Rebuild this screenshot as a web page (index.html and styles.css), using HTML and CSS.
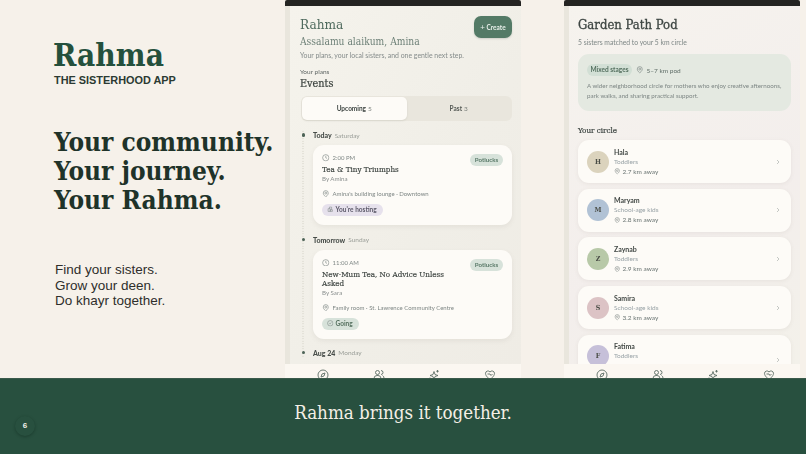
FILE: index.html
```html
<!DOCTYPE html>
<html lang="en">
<head>
<meta charset="utf-8">
<title>Rahma</title>
<link rel="stylesheet" href="styles.css">
</head>
<body>
<svg class="sprite" xmlns="http://www.w3.org/2000/svg">
  <symbol id="clock" viewBox="0 0 24 24"><circle cx="12" cy="12" r="10"/><path d="M12 6v6l4 2"/></symbol>
  <symbol id="pin" viewBox="0 0 24 24"><path d="M20 10c0 6-8 12-8 12s-8-6-8-12a8 8 0 0 1 16 0z"/><circle cx="12" cy="10" r="3"/></symbol>
  <symbol id="check" viewBox="0 0 24 24"><circle cx="12" cy="12" r="10"/><path d="M8 12l3 3 5-6"/></symbol>
  <symbol id="chev" viewBox="0 0 24 24"><path d="M8 4l8 8-8 8"/></symbol>
  <symbol id="host" viewBox="0 0 24 24"><path d="M4 20V10h8v10zM12 20v-6h8v6zM9 10V4h8v10"/></symbol>
  <symbol id="compass" viewBox="0 0 24 24"><circle cx="12" cy="12" r="10"/><path d="M16 8l-2 6-6 2 2-6z"/></symbol>
  <symbol id="people" viewBox="0 0 24 24"><circle cx="9" cy="7" r="4"/><path d="M2 21v-2a6 6 0 0 1 6-6h2a6 6 0 0 1 6 6v2"/><path d="M16 3a4 4 0 0 1 0 8M19 13a6 6 0 0 1 3 6v2"/></symbol>
  <symbol id="spark" viewBox="0 0 24 24"><path d="M12 5l2 6 6 2-6 2-2 6-2-6-6-2 6-2z"/><path d="M19 2v5M16.500 4.500h5M4 17v4M2 19h4"/></symbol>
  <symbol id="heart" viewBox="0 0 24 24"><path d="M12 21S3 15 3 8.500A5 5 0 0 1 12 6a5 5 0 0 1 9 2.500C21 15 12 21 12 21z"/><path d="M7 10h5l2 3 3-3"/></symbol>
</svg>
<main class="slide">
  <section class="stage">
    <div class="intro">
      <h1 class="brand">Rahma</h1>
      <p class="tagline">THE SISTERHOOD APP</p>
      <h2 class="headline">Your community.<br>Your journey.<br>Your Rahma.</h2>
      <p class="lede">Find your sisters.<br>Grow your deen.<br>Do khayr together.</p>
    </div>

    <div class="phone phone-events">
      <div class="status"></div>
      <div class="screen">
        <div class="scroll scroll-events">
          <header class="app-head">
            <div>
              <div class="app-name">Rahma</div>
              <div class="greet">Assalamu alaikum, Amina</div>
            </div>
            <div class="create"><span class="plus">+</span> Create</div>
          </header>
          <p class="app-sub">Your plans, your local sisters, and one gentle next step.</p>
          <p class="eyebrow">Your plans</p>
          <h3 class="events-title">Events</h3>
          <div class="segment">
            <div class="seg seg-on"><b>Upcoming</b> <span>5</span></div>
            <div class="seg"><b>Past</b> <span>3</span></div>
          </div>
          <div class="timeline">
            <div class="day"><i class="dot"></i><b>Today</b> <span>Saturday</span></div>
            <article class="event">
              <span class="tag">Potlucks</span>
              <div class="time"><svg class="ic ic-clock"><use href="#clock"/></svg>2:00 PM</div>
              <h4 class="event-title">Tea &amp; Tiny Triumphs</h4>
              <div class="by">By Amina</div>
              <div class="place"><svg class="ic ic-clock"><use href="#pin"/></svg>Amina's building lounge · Downtown</div>
              <span class="state state-host"><svg class="ic ic-small"><use href="#host"/></svg>You're hosting</span>
            </article>
            <div class="day day-next"><i class="dot"></i><b>Tomorrow</b> <span>Sunday</span></div>
            <article class="event">
              <span class="tag">Potlucks</span>
              <div class="time"><svg class="ic ic-clock"><use href="#clock"/></svg>11:00 AM</div>
              <h4 class="event-title">New-Mum Tea, No Advice Unless Asked</h4>
              <div class="by">By Sara</div>
              <div class="place"><svg class="ic ic-clock"><use href="#pin"/></svg>Family room · St. Lawrence Community Centre</div>
              <span class="state state-going"><svg class="ic ic-small"><use href="#check"/></svg>Going</span>
            </article>
            <div class="day day-last"><i class="dot"></i><b>Aug 24</b> <span>Monday</span></div>
          </div>
        </div>
        <nav class="tabs">
          <svg class="tab"><use href="#compass"/></svg>
          <svg class="tab"><use href="#people"/></svg>
          <svg class="tab"><use href="#spark"/></svg>
          <svg class="tab"><use href="#heart"/></svg>
        </nav>
      </div>
    </div>

    <div class="phone phone-pod">
      <div class="status"></div>
      <div class="screen">
        <div class="scroll scroll-pod">
          <h3 class="pod-title">Garden Path Pod</h3>
          <p class="pod-sub">5 sisters matched to your 5 km circle</p>
          <div class="pod-card">
            <div class="pod-meta"><span class="stage-pill">Mixed stages</span><svg class="ic ic-clock"><use href="#pin"/></svg><span>5–7 km pod</span></div>
            <p class="pod-desc">A wider neighborhood circle for mothers who enjoy creative afternoons, park walks, and sharing practical support.</p>
          </div>
          <h4 class="circle-title">Your circle</h4>
          <div class="members">
            <div class="member"><div class="avatar av-h">H</div><div class="who"><b>Hala</b><span>Toddlers</span><em><svg class="ic ic-small"><use href="#pin"/></svg>2.7 km away</em></div><svg class="chev"><use href="#chev"/></svg></div>
            <div class="member"><div class="avatar av-m">M</div><div class="who"><b>Maryam</b><span>School-age kids</span><em><svg class="ic ic-small"><use href="#pin"/></svg>2.8 km away</em></div><svg class="chev"><use href="#chev"/></svg></div>
            <div class="member"><div class="avatar av-z">Z</div><div class="who"><b>Zaynab</b><span>Toddlers</span><em><svg class="ic ic-small"><use href="#pin"/></svg>2.9 km away</em></div><svg class="chev"><use href="#chev"/></svg></div>
            <div class="member"><div class="avatar av-s">S</div><div class="who"><b>Samira</b><span>School-age kids</span><em><svg class="ic ic-small"><use href="#pin"/></svg>3.2 km away</em></div><svg class="chev"><use href="#chev"/></svg></div>
            <div class="member member-last"><div class="avatar av-f">F</div><div class="who"><b>Fatima</b><span>Toddlers</span></div><svg class="chev"><use href="#chev"/></svg></div>
          </div>
        </div>
        <nav class="tabs">
          <svg class="tab"><use href="#compass"/></svg>
          <svg class="tab"><use href="#people"/></svg>
          <svg class="tab"><use href="#spark"/></svg>
          <svg class="tab"><use href="#heart"/></svg>
        </nav>
      </div>
    </div>
  </section>

  <footer class="banner">
    <p class="banner-text">Rahma brings it together.</p>
    <div class="page-no">6</div>
  </footer>
</main>
</body>
</html>
```
FILE: styles.css
```css
* { box-sizing: border-box; margin: 0; padding: 0; }
html, body { width: 806px; height: 454px; overflow: hidden; }
body { background: #f6f1ea; font-family: Lato, sans-serif; }
.sprite { display: none; }

.slide { position: relative; width: 806px; height: 454px; display: flex; flex-direction: column; }
.stage { height: 378px; display: flex; overflow: hidden; }

/* Left intro */
.intro { width: 285px; flex: none; padding: 39px 0 0 53px; color: #1f3a2d; }
.brand { font: 700 31.300px/32px "DejaVu Serif Condensed", "DejaVu Serif", serif; color: #24503c; }
.tagline { font: 700 10.900px/14px "Liberation Sans", sans-serif; color: #2b3a32; margin: 2px 0 0 1px; }
.headline { font: 700 26px/29px "DejaVu Serif Condensed", "DejaVu Serif", serif; color: #1f3329; margin: 41px 0 0 1px; white-space: nowrap; }
.lede { font: 400 13.500px/15.500px "Liberation Sans", sans-serif; color: #2e2e2c; margin: 47px 0 0 2px; }

/* Phones */
.phone { flex: none; width: 236px; display: flex; flex-direction: column; height: 378px; filter: blur(.35px); }
.phone-pod { margin-left: 43px; }
.status { height: 6px; flex: none; background: #242422; border-radius: 2px 2px 0 0; }
.screen { flex: 1; min-height: 0; display: flex; flex-direction: column; }
.scroll { flex: 1; min-height: 0; overflow: hidden; border-left: 5px solid #e9e6dd; }
.scroll-events { background: linear-gradient(120deg, #f5f3ec 0%, #f0eee7 60%, #efece5 100%); padding: 11px 9px 0 10px; }
.scroll-pod { background: linear-gradient(150deg, #f6f3ee 0%, #f3eeec 60%, #f3f1ea 100%); padding: 11px 9px 0 9px; }
.tabs { height: 14px; flex: none; overflow: hidden; background: #fbf7f1; display: flex; justify-content: space-between; padding: 5px 25px 0 32px; }
.tab { width: 12px; height: 12px; flex: none; fill: none; stroke: #5c6e65; stroke-width: 1.800; }

.ic { fill: none; stroke: #6f7a78; stroke-width: 1.800; flex: none; }
.ic-clock { width: 7.500px; height: 7.500px; margin-right: 3px; }
.ic-small { width: 6.500px; height: 6.500px; margin-right: 2px; }

/* Events */
.app-head { display: flex; justify-content: space-between; align-items: flex-start; }
.app-name { font: 400 13.500px/17px "DejaVu Serif Condensed", "DejaVu Serif", serif; color: #4e6a5d; margin-top: -1px; }
.greet { font: 400 10.200px/13px "DejaVu Serif Condensed", "DejaVu Serif", serif; color: #6e8178; margin-top: 2px; }
.create { width: 38px; height: 22px; margin-top: -1px; background: #537a66; border-radius: 7px; color: #e8efe9; font: 700 6.500px/22px Lato, sans-serif; text-align: center; box-shadow: 0 1px 2px rgba(60,80,70,.2); }
.plus { font-size: 8px; font-weight: 400; }
.app-sub { font-size: 6.900px; line-height: 10px; color: #858c8b; margin-top: 2px; }
.eyebrow { font-size: 6.500px; line-height: 8px; color: #5f6664; margin-top: 8px; }
.events-title { font: 400 10.800px/13px "DejaVu Serif Condensed", "DejaVu Serif", serif; -webkit-text-stroke: .2px #39403c; color: #39403c; margin-top: 1px; }
.segment { display: flex; height: 25px; margin: 6px 0 0 1px; background: #e9e6dd; border-radius: 6px; padding: 1px; width: 211px; }
.seg { flex: 1; display: flex; align-items: center; justify-content: center; gap: 2px; font-size: 6.500px; color: #7b807c; }
.seg b { font-weight: 700; color: #555a56; }
.seg-on { background: #fdfbf7; border-radius: 5px; box-shadow: 0 1px 2px rgba(90,90,70,.12); }
.seg-on b { color: #3f4643; }

.timeline { margin-top: 9px; background: radial-gradient(circle, #dedcd2 .5px, transparent .7px) 2px 0 / 2px 2.500px repeat-y; }
.day { display: flex; align-items: center; height: 10px; font-size: 6.500px; color: #9a9e98; padding-left: 18px; gap: 3px; position: relative; margin-left: -5px; }
.day b { font-weight: 900; font-size: 7px; color: #474d49; }
.dot { position: absolute; left: 6.500px; top: 3px; width: 3.500px; height: 3.500px; border-radius: 50%; background: #4d6357; }
.day-next { margin-top: 10px; }
.day-last { margin-top: 9px; }
.event { position: relative; width: 199px; margin: 5px 0 0 13px; background: #fdfbf7; border-radius: 11px; padding: 9px; box-shadow: 0 2px 5px rgba(110,105,85,.09); }
.tag { position: absolute; top: 9px; right: 9px; width: 33px; height: 12px; border-radius: 6px; background: #d7e2da; color: #5a7a69; font-size: 6.200px; font-weight: 700; line-height: 12px; text-align: center; }
.time { display: flex; align-items: center; font-size: 6px; line-height: 8px; color: #7f8785; }
.event-title { font: 400 8px/9.500px "DejaVu Serif Condensed", "DejaVu Serif", serif; -webkit-text-stroke: .15px #3d4440; color: #3d4440; margin-top: 3px; width: 130px; }
.by { font-size: 6.200px; line-height: 8px; color: #8a8f8e; margin-top: 0; }
.place { display: flex; align-items: center; font-size: 6px; line-height: 8px; color: #7f8785; margin-top: 7px; }
.state { display: flex; width: fit-content; align-items: center; height: 12px; padding: 0 6px 0 5px; border-radius: 6px; font-size: 6.500px; font-weight: 700; margin-top: 6px; }
.state-host { background: #e6e1ec; color: #5d5a6a; }
.state-going { background: #d7e2da; color: #55705f; }

/* Pod */
.pod-title { font: 400 13px/17px "DejaVu Serif Condensed", "DejaVu Serif", serif; -webkit-text-stroke: .3px #3e4643; color: #3e4643; margin-top: -1px; }
.pod-sub { font-size: 6.800px; line-height: 10px; color: #7e8786; margin-top: 4px; }
.pod-card { background: #e4e9e1; border-radius: 11px; padding: 10px 9px 0; height: 57px; margin-top: 7px; width: 213px; }
.pod-meta { display: flex; align-items: center; font-size: 6.500px; color: #5f6d67; }
.stage-pill { width: 45px; height: 12px; border-radius: 6px; background: #d2dfd5; color: #557060; font-weight: 700; line-height: 12px; text-align: center; margin-right: 4px; }
.pod-desc { font-size: 6.200px; line-height: 10px; color: #7d8684; margin-top: 5px; }
.circle-title { font: 400 8px/11px "DejaVu Serif Condensed", "DejaVu Serif", serif; -webkit-text-stroke: .2px #3e4643; color: #3e4643; margin-top: 14px; }
.members { display: flex; flex-direction: column; gap: 5.700px; margin-top: 4px; }
.member { display: flex; align-items: center; height: 43px; flex: none; width: 213px; background: #fdfbf7; border-radius: 11px; padding: 0 10px 0 9px; box-shadow: 0 1px 4px rgba(110,105,85,.09); }
.member-last { align-items: flex-start; padding-top: 7px; }
.member-last .chev { margin-top: 15px; }
.avatar { width: 22px; height: 22px; flex: none; border-radius: 50%; font: 700 7px/22px "DejaVu Serif Condensed", "DejaVu Serif", serif; color: #4a4d46; text-align: center; margin-right: 5px; }
.member-last .avatar { margin-top: 3px; }
.av-h { background: #dbd3bd; }
.av-m { background: #b1c2d5; }
.av-z { background: #b8c9a8; }
.av-s { background: #dcc3c5; }
.av-f { background: #c6c0d9; }
.who { flex: 1; display: flex; flex-direction: column; gap: 2px; }
.who b { font-size: 7px; font-weight: 700; line-height: 8px; color: #444a47; }
.who span { font-size: 6.500px; line-height: 8px; color: #98a2a6; }
.who em { display: flex; align-items: center; font-style: normal; font-size: 6.500px; line-height: 8px; color: #6a7472; }
.chev { width: 6px; height: 6px; flex: none; fill: none; stroke: #a3a8a5; stroke-width: 2.500; }

/* Banner */
.banner { flex: 1; background: #28503f; display: flex; align-items: center; justify-content: center; border-top: 1px solid #3b5a4b; }
.banner-text { font: 400 18.600px/24px "DejaVu Serif Condensed", "DejaVu Serif", serif; color: #f4efe6; margin-top: -7px; }
.page-no { position: absolute; left: 15px; bottom: 18px; width: 20px; height: 20px; border-radius: 50%; background: #28503f; color: #f1f0e8; font: 700 8px/20px "Liberation Sans", sans-serif; text-align: center; box-shadow: 0 1px 3px rgba(10,30,20,.35); }
```
